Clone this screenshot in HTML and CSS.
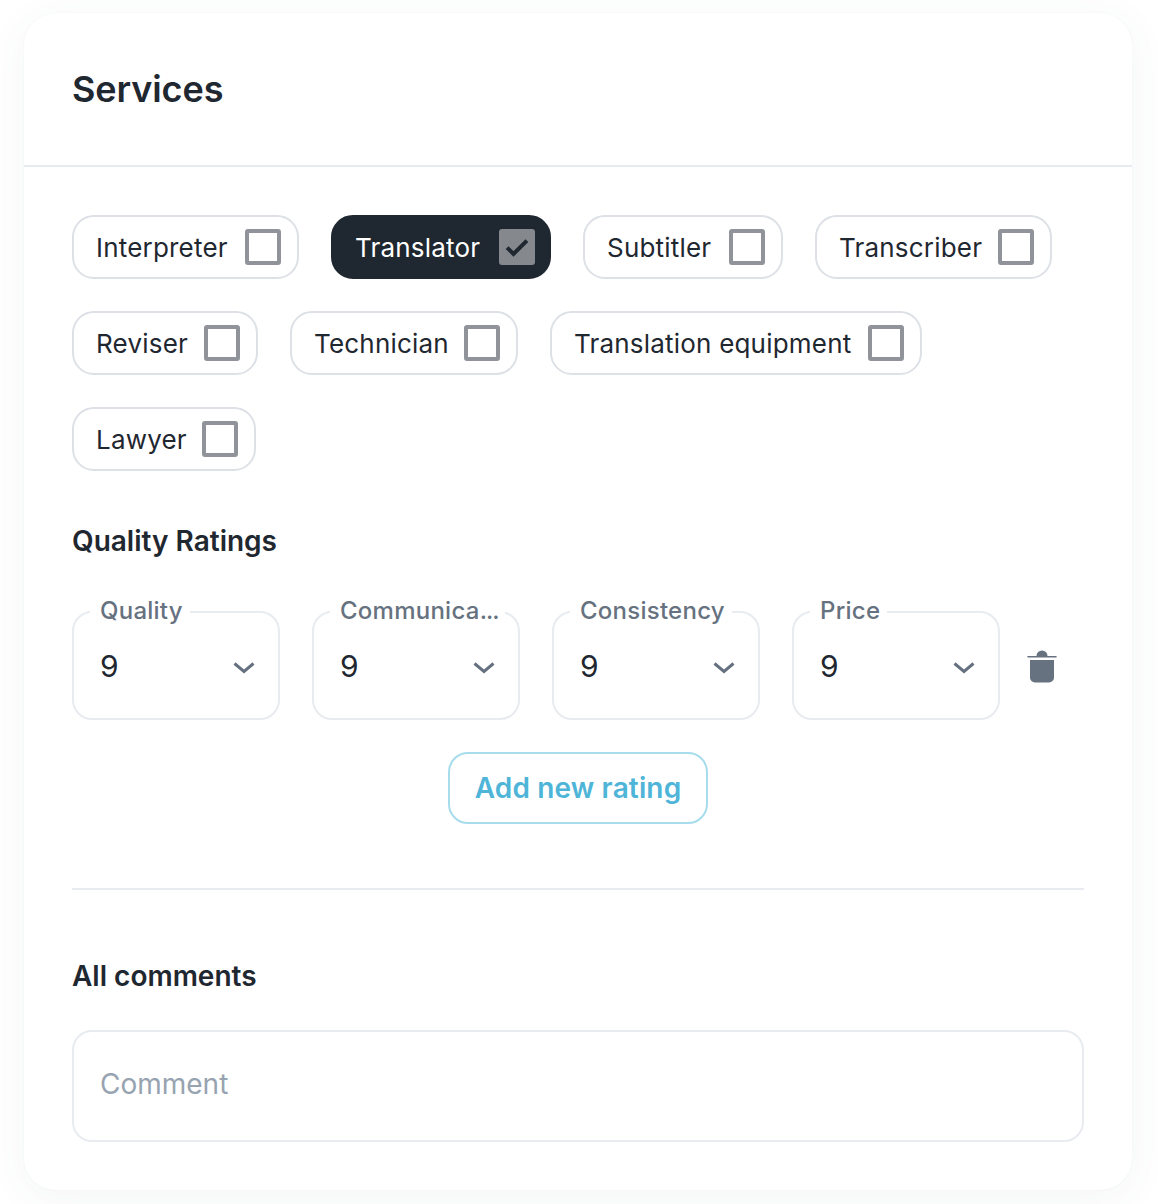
FILE: index.html
```html
<!DOCTYPE html>
<html lang="en">
<head>
<meta charset="utf-8">
<title>Services</title>
<link rel="stylesheet" href="styles.css">
</head>
<body>
<main class="card">
  <header class="card-header"><h1 class="title">Services</h1></header>
  <div class="card-body">
    <div class="chips">
      <label class="chip chip-interpreter"><span>Interpreter</span><span class="box"></span></label>
      <label class="chip chip-translator chip-on"><span>Translator</span><span class="box box-on"><svg viewBox="0 0 24 24" class="check"><path d="M3.500 12.500l5.500 5.500L20.500 6.500" /></svg></span></label>
      <label class="chip chip-subtitler"><span>Subtitler</span><span class="box"></span></label>
      <label class="chip chip-transcriber"><span>Transcriber</span><span class="box"></span></label>
      <label class="chip chip-reviser"><span>Reviser</span><span class="box"></span></label>
      <label class="chip chip-technician"><span>Technician</span><span class="box"></span></label>
      <label class="chip chip-equipment"><span>Translation equipment</span><span class="box"></span></label>
      <label class="chip chip-lawyer"><span>Lawyer</span><span class="box"></span></label>
    </div>
    <h2 class="subhead ratings-head">Quality Ratings</h2>
    <div class="ratings">
      <div class="select"><span class="select-label">Quality</span><span class="select-value">9</span><svg class="chev" viewBox="0 0 24 14"><path d="M2.500 2.500L12 10.500l9.500-8"/></svg></div>
      <div class="select"><span class="select-label">Communica<span class="ellipsis">...</span></span><span class="select-value">9</span><svg class="chev" viewBox="0 0 24 14"><path d="M2.500 2.500L12 10.500l9.500-8"/></svg></div>
      <div class="select"><span class="select-label">Consistency</span><span class="select-value">9</span><svg class="chev" viewBox="0 0 24 14"><path d="M2.500 2.500L12 10.500l9.500-8"/></svg></div>
      <div class="select"><span class="select-label">Price</span><span class="select-value">9</span><svg class="chev" viewBox="0 0 24 14"><path d="M2.500 2.500L12 10.500l9.500-8"/></svg></div>
      <svg class="trash" viewBox="0 0 30 34"><path d="M9.500 7a5.500 5.500 0 0 1 11 0h8.500a.8.8 0 0 1 0 1.600H1a.8.8 0 0 1 0-1.600z"/><path d="M3 11h24v17.500a5 5 0 0 1-5 5H8a5 5 0 0 1-5-5z"/></svg>
    </div>
    <div class="add-row"><button class="add-btn" type="button">Add new rating</button></div>
    <hr class="rule">
    <h2 class="subhead">All comments</h2>
    <div class="comment">Comment</div>
  </div>
</main>
</body>
</html>
```
FILE: styles.css
```css
* { box-sizing: border-box; }
html, body { margin: 0; background: #fff; }
body {
  padding: 13px 26px 14px 24px;
  font-family: Inter, "Liberation Sans", sans-serif;
  color: #1f2730;
}
.card {
  background: #fff;
  border-radius: 32px;
  box-shadow: 0 8px 40px rgba(60, 80, 110, 0.06), 0 0 2px rgba(60, 80, 110, 0.06);
  height: 1177px;
}
.card-header {
  height: 154px;
  padding: 56px 48px 0;
  border-bottom: 2px solid #e8ebef;
}
.title { margin: 0; font-size: 36px; line-height: 40px; font-weight: 600; letter-spacing: -0.1px; }
.card-body { padding: 48px 48px 0; }
.chips { display: flex; flex-wrap: wrap; gap: 32px; }
.chip {
  display: flex;
  align-items: center;
  justify-content: space-between;
  height: 64px;
  padding: 0 16px 0 22px;
  border: 2px solid #dde1e6;
  border-radius: 22px;
  font-size: 26px;
  letter-spacing: 0.2px;
}
.chip-interpreter { width: 227px; }
.chip-translator { width: 220px; }
.chip-subtitler { width: 200px; }
.chip-transcriber { width: 237px; }
.chip-reviser { width: 186px; }
.chip-technician { width: 228px; }
.chip-equipment { width: 372px; }
.chip-lawyer { width: 184px; }
.chip-on { background: #1f2730; border-color: #1f2730; color: #fff; padding-right: 14px; }
.box { width: 36px; height: 36px; border: 4px solid #909399; border-radius: 3px; display: flex; }
.box-on { background: #85888d; border: 0; align-items: center; justify-content: center; }
.check { width: 28px; height: 28px; fill: none; stroke: #1f2730; stroke-width: 3.4; }
.subhead { margin: 0; font-size: 28px; line-height: 36px; font-weight: 600; }
.ratings-head { margin-top: 52px; }
.ratings { display: flex; gap: 32px; align-items: center; margin-top: 52px; }
.select {
  position: relative;
  display: flex;
  align-items: center;
  justify-content: space-between;
  width: 208px;
  height: 109px;
  padding: 1px 22px 0 26px;
  border: 2px solid #e8ebef;
  border-radius: 20px;
}
.select-label {
  position: absolute;
  top: -16px;
  left: 16px;
  padding: 0 7px 0 10px;
  background: #fff;
  color: #66727f;
  font-size: 24px;
  line-height: 28px;
  font-weight: 500;
  letter-spacing: 0.25px;
  white-space: nowrap;
}
.ellipsis { letter-spacing: -1px; }
.select-value { font-size: 30px; line-height: 36px; }
.chev { width: 24px; height: 14px; margin-top: 4px; fill: none; stroke: #66727f; stroke-width: 3; }
.trash { width: 30px; height: 34px; fill: #66727f; margin-left: -5px; }
.add-row { display: flex; justify-content: center; margin-top: 32px; }
.add-btn {
  width: 260px;
  height: 72px;
  background: #fff;
  border: 2px solid #a6dcec;
  border-radius: 20px;
  color: #4fb5d8;
  font-family: inherit;
  font-size: 28px;
  font-weight: 600;
  letter-spacing: 0.15px;
}
.rule { margin: 64px 0 68px; border: 0; border-top: 2px solid #e8ebef; }
.comment {
  display: flex;
  align-items: center;
  height: 112px;
  margin-top: 36px;
  padding: 0 0 4px 26px;
  border: 2px solid #e8ebef;
  border-radius: 20px;
  color: #97a3b0;
  font-size: 28px;
}
```
